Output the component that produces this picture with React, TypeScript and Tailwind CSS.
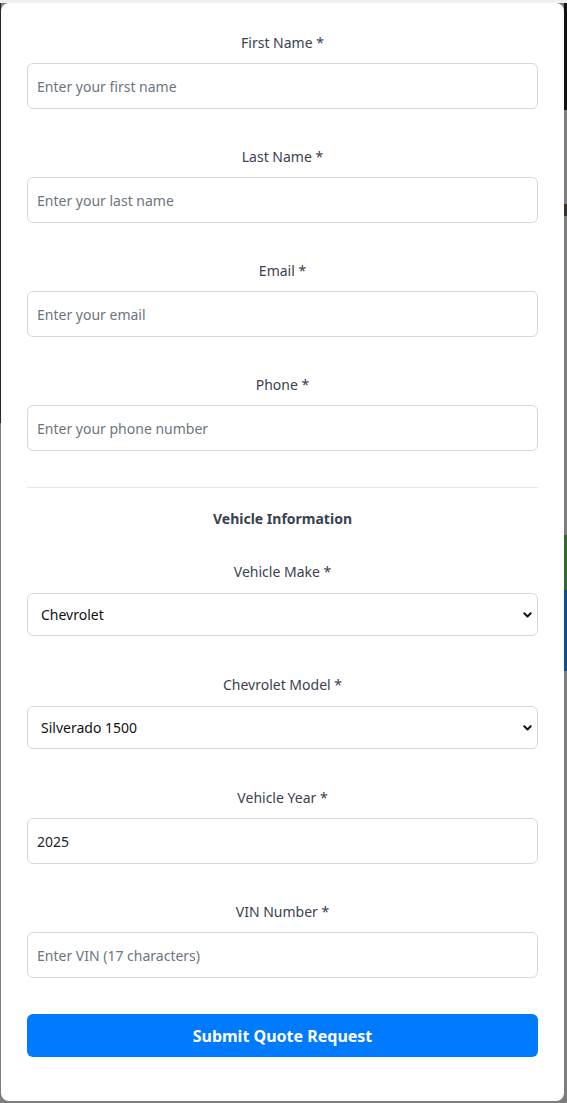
import { useState } from "react";

const labelCls = "block text-center text-[14px] leading-6 text-[#3a4150]";
const inputCls =
  "w-full h-[46px] rounded-md border border-[#d5d8dc] bg-white px-[9px] text-[14px] text-[#212529] placeholder:text-[#6c757d] outline-none";

const Field = ({
  label,
  placeholder,
  value,
  onChange,
}: {
  label: string;
  placeholder?: string;
  value?: string;
  onChange?: (v: string) => void;
}) => {
  return (
    <div className="mb-9">
      <label className={`${labelCls} mb-2`}>{label}</label>
      <input
        className={inputCls}
        placeholder={placeholder}
        value={value}
        onChange={(e) => onChange?.(e.target.value)}
      />
    </div>
  );
};

const SelectField = ({
  label,
  value,
  options,
  onChange,
}: {
  label: string;
  value: string;
  options: string[];
  onChange: (v: string) => void;
}) => {
  return (
    <div className="mb-[37px]">
      <label className={`${labelCls} mb-[9px]`}>{label}</label>
      <div className="relative">
        <select
          className="w-full h-[43px] appearance-none rounded-md border border-[#d5d8dc] bg-white pl-[13px] pr-8 text-[14px] text-[#111] outline-none"
          value={value}
          onChange={(e) => onChange(e.target.value)}
        >
          {options.map((o) => (
            <option key={o}>{o}</option>
          ))}
        </select>
        <svg
          className="pointer-events-none absolute right-[6px] top-1/2 -translate-y-1/2"
          width="9"
          height="6"
          viewBox="0 0 9 6"
        >
          <path d="M1.3 1.3 L4.5 4.5 L7.7 1.3" fill="none" stroke="#111" strokeWidth="2" strokeLinecap="round" strokeLinejoin="round" />
        </svg>
      </div>
    </div>
  );
};

const App = () => {
  const [make, setMake] = useState("Chevrolet");
  const [model, setModel] = useState("Silverado 1500");
  const [year, setYear] = useState("2025");

  return (
    <div className="flex h-[1103px] w-[567px] flex-col overflow-hidden bg-[#7d7d7d] font-['Noto_Sans',sans-serif]">
      <div className="h-[3px] bg-[#eef0f3]" />
      <div className="flex flex-1">
        <div className="flex w-px flex-col">
          <div className="h-[420px] bg-[#23272a]" />
          <div className="flex-1 bg-[#7d7d7d]" />
        </div>

        <form
          className="h-[1098px] w-[563px] rounded-lg bg-white px-[26px] pt-7"
          onSubmit={(e) => e.preventDefault()}
        >
          <Field label="First Name *" placeholder="Enter your first name" />
          <Field label="Last Name *" placeholder="Enter your last name" />
          <Field label="Email *" placeholder="Enter your email" />
          <Field label="Phone *" placeholder="Enter your phone number" />

          <div className="border-t border-[#e6e8eb] pt-[19px]">
            <h3 className="mb-[29px] text-center text-[14px] font-bold leading-6 text-[#3a4150]">
              Vehicle Information
            </h3>
          </div>

          <SelectField
            label="Vehicle Make *"
            value={make}
            options={["Chevrolet", "Ford", "GMC", "Ram", "Toyota"]}
            onChange={setMake}
          />
          <SelectField
            label={`${make} Model *`}
            value={model}
            options={["Silverado 1500", "Silverado 2500HD", "Colorado", "Tahoe"]}
            onChange={setModel}
          />
          <Field label="Vehicle Year *" value={year} onChange={setYear} />
          <Field label="VIN Number *" placeholder="Enter VIN (17 characters)" />

          <button className="h-[43px] w-full rounded-md bg-[#007bff] text-[16px] font-bold text-white">
            Submit Quote Request
          </button>
        </form>

        <div className="flex w-[3px] flex-col">
          <div className="h-[107px] bg-[#121212]" />
          <div className="h-[94px] bg-[#7d7d7d]" />
          <div className="h-[12px] bg-[#3a3228]" />
          <div className="h-[319px] bg-[#7d7d7d]" />
          <div className="h-[55px] bg-[#2f6a2a]" />
          <div className="h-[81px] bg-[#0d4e93]" />
          <div className="flex-1 bg-[#7d7d7d]" />
        </div>
      </div>
    </div>
  );
};

export default App;
